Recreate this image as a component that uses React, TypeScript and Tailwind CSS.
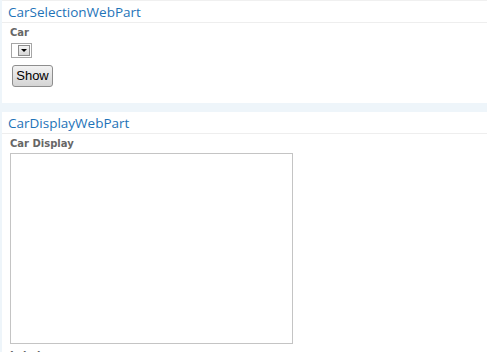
import React from "react";

export default function App() {
  return (
    <div className="w-[487px] h-[352px] overflow-hidden bg-[#eef5fa] pl-[2px] flex flex-col">
      <div className="bg-white h-[103px] shrink-0 border-t border-[#f0f0f0]">
        <div
          className="pl-[6px] pt-[2px] h-[22px] text-[13.5px] leading-[18px] text-[#1e73b8] border-b border-[#eeeeee]"
          style={{ fontFamily: '"Open Sans", sans-serif' }}
        >
          CarSelectionWebPart
        </div>
        <div className="pl-[8px]" style={{ fontFamily: '"DejaVu Sans", Verdana, sans-serif' }}>
          <div className="pt-[4px] text-[10px] font-bold text-[#666666] leading-[12px]">Car</div>
          <div className="mt-[4px] ml-[1px] w-[21px] h-[15px] border border-[#a6a6a6] flex justify-end items-center pr-[1px] bg-white">
            <div className="w-[12px] h-[11px] bg-gradient-to-b from-[#f4f4f4] to-[#d6d6d6] border border-[#8c8c8c] flex items-center justify-center">
              <div className="w-0 h-0 border-l-[3px] border-r-[3px] border-t-[3px] border-l-transparent border-r-transparent border-t-black" />
            </div>
          </div>
          <div className="mt-[5px] ml-[2px]">
            <button
              className="w-[41px] h-[22px] border border-[#8e8e8e] rounded-[3px] bg-gradient-to-b from-[#f2f2f2] to-[#d4d4d4] text-[13px] text-black leading-[18px]"
              style={{ fontFamily: '"Liberation Sans", Arial, sans-serif' }}
            >
              Show
            </button>
          </div>
        </div>
      </div>
      <div className="h-[9px] shrink-0" />
      <div className="bg-white flex-1">
        <div
          className="pl-[6px] pt-[2px] h-[22px] text-[13.5px] leading-[18px] text-[#1e73b8] border-b border-[#eeeeee]"
          style={{ fontFamily: '"Open Sans", sans-serif' }}
        >
          CarDisplayWebPart
        </div>
        <div className="pl-[8px]" style={{ fontFamily: '"DejaVu Sans", Verdana, sans-serif' }}>
          <div className="pt-[4px] text-[10px] font-bold text-[#666666] leading-[12px]">Car Display</div>
          <div className="mt-[3px] w-[283px] h-[191px] border border-[#c4c4c4] bg-white" />
          <div className="pt-[6px] text-[10px] font-bold text-[#666666] leading-[12px]">Label</div>
        </div>
      </div>
    </div>
  );
}
